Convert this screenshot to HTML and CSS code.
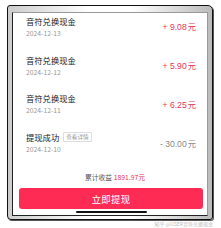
FILE: index.html
```html
<!DOCTYPE html>
<html lang="zh">
<head>
<meta charset="utf-8">
<link rel="stylesheet" href="styles.css">
</head>
<body>
<div class="page">
  <div class="phone">
    <div class="screen">
      <ul class="list">
        <li class="row">
          <div class="info"><div class="title">音符兑换现金</div><div class="date">2024-12-13</div></div>
          <div class="amount plus">+ 9.08<span class="unit">元</span></div>
        </li>
        <li class="row">
          <div class="info"><div class="title">音符兑换现金</div><div class="date">2024-12-12</div></div>
          <div class="amount plus">+ 5.90<span class="unit">元</span></div>
        </li>
        <li class="row">
          <div class="info"><div class="title">音符兑换现金</div><div class="date">2024-12-11</div></div>
          <div class="amount plus">+ 6.25<span class="unit">元</span></div>
        </li>
        <li class="row">
          <div class="info"><div class="title">提现成功<span class="tag">查看详情</span></div><div class="date">2024-12-10</div></div>
          <div class="amount minus">- 30.00<span class="unit">元</span></div>
        </li>
      </ul>
      <div class="footer">
        <div class="total">累计收益 <span class="num">1891.97元</span></div>
        <button class="btn">立即提现</button>
        <div class="home"></div>
      </div>
    </div>
  </div>
  <div class="watermark">知乎 @USER音符兑换现金</div>
</div>
</body>
</html>
```

FILE: styles.css
```css
* { box-sizing: border-box; }
html, body { margin: 0; padding: 0; background: #fff; }
body { font-family: "Noto Sans CJK SC", "Noto Sans", sans-serif; width: 221px; height: 228px; overflow: hidden; }
.page { padding: 5px 8px 0 7px; position: relative; height: 228px; }
.phone {
  border: 1.5px solid #111;
  border-radius: 3px 5px 3px 4px;
  height: 215px;
  padding: 6px 4px 3px 4px;
  background: linear-gradient(90deg, #ccc, #fff 40%, #fff 60%, #bbb);
  box-shadow: 1px 1px 0 #555;
}
.screen {
  background: #fff;
  height: 100%;
  border-left: 1px solid #222;
  border-top: 1px solid #999;
  border-right: 1px solid #999;
  border-bottom: 1px solid #222;
  display: flex;
  flex-direction: column;
  overflow: hidden;
}
.list { list-style: none; margin: -6px 0 0; padding: 0; }
.row {
  display: flex;
  justify-content: space-between;
  align-items: center;
  height: 38.8px;
  padding: 0 11px 0 13px;
}
.title { font-size: 8.3px; color: #222; line-height: 12px; display: flex; align-items: center; }
.date { font-size: 6.8px; color: #999; line-height: 10px; margin-top: 1px; }
.amount { font-size: 8.6px; font-family: "Liberation Sans", sans-serif; }
.amount .unit { font-family: "Noto Sans CJK SC", sans-serif; font-size: 8.3px; margin-left: 1px; }
.plus { color: #e8335a; }
.minus { color: #888; }
.tag {
  font-size: 5.6px;
  color: #999;
  border: 1px solid #ddd;
  padding: 0 2px;
  line-height: 8px;
  margin-left: 4px;
  border-radius: 1px;
}
.footer { margin-top: auto; display: flex; flex-direction: column; align-items: center; padding: 0 4px 2px 6px; }
.total { font-size: 6.8px; line-height: 10px; color: #555; margin-bottom: 6px; margin-left: 8px; }
.total .num { color: #e8335a; }
.btn {
  width: 100%;
  height: 21px;
  border: none;
  border-radius: 3px;
  background: #fe2c55;
  color: #fff;
  font-family: "Noto Sans CJK SC", sans-serif;
  font-size: 9.4px;
  letter-spacing: 0.3px;
}
.home { width: 71px; height: 2px; background: #111; border-radius: 1px; margin-top: 2px; }
.watermark {
  position: absolute;
  right: 8px;
  bottom: 1px;
  font-size: 5px;
  color: #bbb;
}
```
